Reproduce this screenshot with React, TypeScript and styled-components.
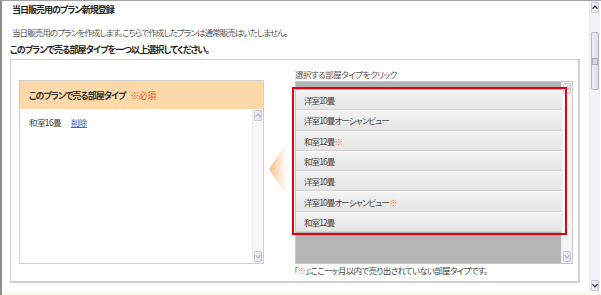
import * as React from 'react';
import styled, { createGlobalStyle } from 'styled-components';

const GlobalStyle = createGlobalStyle`
  html, body {
    margin: 0;
    padding: 0;
    background: #fff;
  }
  body {
    font-family: "Noto Sans CJK JP", "Noto Sans", sans-serif;
    font-feature-settings: "palt";
    color: #333;
  }
`;

const Page = styled.div`
  width: 599px;
  height: 294px;
  border-top: 1px solid #a3a3a3;
  border-left: 2px solid #8c8c8c;
  display: flex;
  flex-direction: column;
  overflow: hidden;
`;

const Body = styled.div`
  flex: 1;
  display: flex;
  min-height: 0;
`;

const Footer = styled.div`
  height: 3px;
  background: #f8f8ef;
`;

const Main = styled.div`
  width: 579px;
  padding-left: 8px;
  display: flex;
  flex-direction: column;
`;

const Title = styled.h1`
  margin: 0;
  font-size: 9px;
  letter-spacing: -1px;
  line-height: 18px;
  font-weight: bold;
  color: #222;
  padding-left: 2px;
`;

const Description = styled.p`
  margin: 6px 0 0;
  font-size: 8.5px;
  letter-spacing: -0.9px;
  line-height: 14px;
  color: #555;
  padding-left: 2px;
`;

const Heading = styled.h2`
  margin: 4px 0 0;
  font-size: 9px;
  letter-spacing: -0.9px;
  line-height: 14px;
  font-weight: bold;
  color: #222;
`;

const Box = styled.div`
  position: relative;
  margin-top: 2px;
  width: 567px;
  height: 221px;
  border: 1px solid #d2d2d2;
  border-right-width: 2px;
  border-bottom-width: 2px;
  display: flex;
  align-items: flex-start;
`;

const LeftPanel = styled.div`
  margin: 20px 0 0 8px;
  width: 243px;
  height: 182px;
  border: 1px solid #cfcfcf;
  display: flex;
  flex-direction: column;
`;

const PanelHeader = styled.div`
  height: 28px;
  background: #fdd9aa;
  display: flex;
  align-items: center;
  padding-left: 9px;
  font-size: 9px;
  letter-spacing: -1px;
  font-weight: bold;
  color: #333;
`;

const Required = styled.span`
  margin-left: 5px;
  font-weight: normal;
  letter-spacing: -0.5px;
  color: #e8602c;
`;

const ChosenList = styled.div`
  flex: 1;
  display: flex;
  min-height: 0;
`;

const ChosenItems = styled.div`
  flex: 1;
  padding: 6px 0 0 9px;
`;

const ChosenRow = styled.div`
  font-size: 8.5px;
  letter-spacing: -0.6px;
  line-height: 14px;
  color: #444;
`;

const RemoveLink = styled.a`
  margin-left: 10px;
  color: #2f66c8;
  text-decoration: underline;
  cursor: pointer;
`;

const ArrowMark = styled.svg`
  margin: 82px 0 0 5px;
  flex: none;
`;

const RightColumn = styled.div`
  margin: 7px 0 0 8px;
  display: flex;
  flex-direction: column;
`;

const PickLabel = styled.div`
  font-size: 8.5px;
  letter-spacing: -0.5px;
  line-height: 14px;
  color: #555;
`;

const GrayBox = styled.div`
  width: 276px;
  height: 181px;
  border: 1px solid #c8c8c8;
  background: #b5b5b5;
  display: flex;
`;

const ItemList = styled.div`
  flex: 1;
  padding-top: 8px;
`;

const Item = styled.div`
  border-top: 1px solid #fbfbfb;
  border-bottom: 1px solid #d2d2d2;
  background: linear-gradient(#f3f3f3, #e5e5e5);
  box-sizing: border-box;
  height: 20.3px;
  display: flex;
  align-items: center;
  padding-left: 8px;
  font-size: 8.5px;
  letter-spacing: -0.9px;
  color: #444;
  cursor: pointer;
`;

const Mark = styled.span`
  color: #f08458;
`;

const Note = styled.div`
  margin-top: 1px;
  margin-left: -1px;
  font-size: 8.5px;
  letter-spacing: -0.7px;
  line-height: 11px;
  color: #444;
`;

const Highlight = styled.div`
  position: absolute;
  left: 281px;
  top: 27px;
  width: 271px;
  height: 144px;
  border: 2px solid #e3000f;
  pointer-events: none;
`;

const Scroll = styled.div<{ $w: number; $track: string }>`
  width: ${({ $w }) => $w}px;
  flex: none;
  display: flex;
  flex-direction: column;
  background: ${({ $track }) => $track};
  border-left: 1px solid #ececf2;
  box-sizing: border-box;
`;

const ScrollBtn = styled.div<{ $dark?: boolean }>`
  height: 9px;
  margin: 1px;
  border: 1px solid #c9cbd6;
  border-radius: 1px;
  background: linear-gradient(90deg, #f4f5fa, #dfe1ec);
  display: flex;
  align-items: center;
  justify-content: center;
  color: ${({ $dark }) => ($dark ? '#333' : '#b8bac8')};
`;

const ScrollTrack = styled.div`
  flex: 1;
  position: relative;
`;

const Thumb = styled.div`
  position: absolute;
  left: 1px;
  right: 1px;
  top: 18px;
  height: 56px;
  border: 1px solid #b6b8c8;
  border-radius: 2px;
  background: linear-gradient(90deg, #eef0f8, #d9dbe8);
  display: flex;
  align-items: center;
  justify-content: center;
`;

const Grip = styled.div`
  width: 5px;
  height: 5px;
  border: 1px solid #aeb0c0;
  background: #d6d8e4;
`;

const Chevron = ({ down }: { down?: boolean }) => (
  <svg width="7" height="5" viewBox="0 0 7 5">
    <path
      d={down ? 'M0.5 1 L3.5 4 L6.5 1' : 'M0.5 4 L3.5 1 L6.5 4'}
      fill="none"
      stroke="currentColor"
      strokeWidth="1.4"
    />
  </svg>
);

const ScrollBar = ({
  width,
  track,
  dark,
  thumb,
}: {
  width: number;
  track: string;
  dark?: boolean;
  thumb?: boolean;
}) => (
  <Scroll $w={width} $track={track}>
    <ScrollBtn $dark={dark}>
      <Chevron />
    </ScrollBtn>
    <ScrollTrack>
      {thumb && (
        <Thumb>
          <Grip />
        </Thumb>
      )}
    </ScrollTrack>
    <ScrollBtn $dark={dark}>
      <Chevron down />
    </ScrollBtn>
  </Scroll>
);

const roomTypes = [
  { name: '洋室10畳', unsold: false },
  { name: '洋室10畳オーシャンビュー', unsold: false },
  { name: '和室12畳', unsold: true },
  { name: '和室16畳', unsold: false },
  { name: '洋室10畳', unsold: false },
  { name: '洋室10畳オーシャンビュー', unsold: true },
  { name: '和室12畳', unsold: false },
];

export default function App() {
  return (
    <>
      <GlobalStyle />
      <Page>
        <Body>
          <Main>
            <Title>当日販売用のプラン新規登録</Title>
            <Description>
              当日販売用のプランを作成します。こちらで作成したプランは通常販売はいたしません。
            </Description>
            <Heading>このプランで売る部屋タイプを一つ以上選択してください。</Heading>
            <Box>
              <LeftPanel>
                <PanelHeader>
                  このプランで売る部屋タイプ<Required>※必須</Required>
                </PanelHeader>
                <ChosenList>
                  <ChosenItems>
                    <ChosenRow>
                      和室16畳<RemoveLink>削除</RemoveLink>
                    </ChosenRow>
                  </ChosenItems>
                  <ScrollBar width={11} track="#f7f7fb" />
                </ChosenList>
              </LeftPanel>
              <ArrowMark width="18" height="54" viewBox="0 0 18 54">
                <defs>
                  <linearGradient id="arrowFade" x1="0" y1="0" x2="1" y2="0">
                    <stop offset="0" stopColor="#fcc088" />
                    <stop offset="1" stopColor="#ffffff" />
                  </linearGradient>
                </defs>
                <polygon points="0,27 18,0 18,54" fill="url(#arrowFade)" />
              </ArrowMark>
              <RightColumn>
                <PickLabel>選択する部屋タイプをクリック</PickLabel>
                <GrayBox>
                  <ItemList>
                    {roomTypes.map((room, i) => (
                      <Item key={i}>
                        {room.name}
                        {room.unsold && <Mark>※</Mark>}
                      </Item>
                    ))}
                  </ItemList>
                  <ScrollBar width={11} track="#f5f5f8" />
                </GrayBox>
                <Note>
                  「<Mark>※</Mark>」:ここ一ヶ月以内で売り出されていない部屋タイプです。
                </Note>
              </RightColumn>
              <Highlight />
            </Box>
          </Main>
          <ScrollBar width={11} track="#f1f1f7" dark thumb />
        </Body>
        <Footer />
      </Page>
    </>
  );
}
